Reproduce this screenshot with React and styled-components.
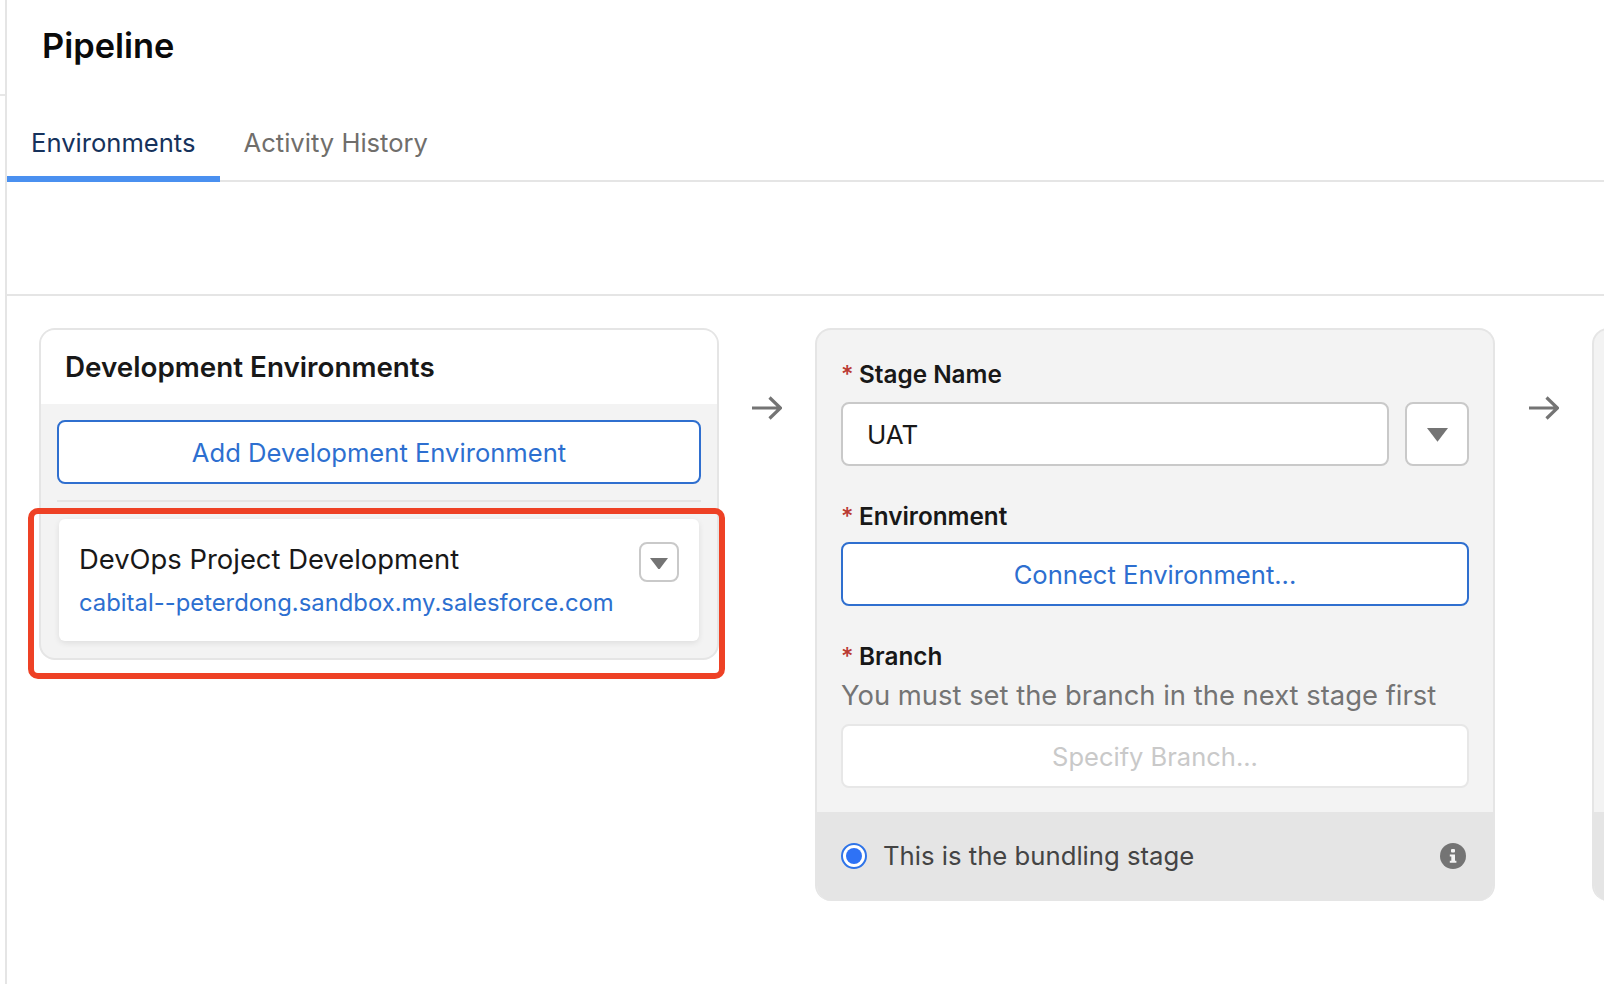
import React from "react";
import styled, { createGlobalStyle } from "styled-components";

const Global = createGlobalStyle`
  html, body { margin: 0; padding: 0; background: #fff; }
  body { font-family: Inter, "Liberation Sans", sans-serif; color: #181818; overflow: hidden; }
  * { box-sizing: border-box; }
`;

const Page = styled.div`
  width: 1604px;
  height: 984px;
  display: flex;
  overflow: hidden;
  background: #fff;
`;
const Rail = styled.div`
  width: 5px;
  flex: none;
  padding-top: 94px;
`;
const RailTick = styled.div`
  height: 2px;
  background: #e7e7e7;
`;
const Main = styled.main`
  flex: 1;
  min-width: 0;
  border-left: 2px solid #e5e5e5;
  display: flex;
  flex-direction: column;
`;
const Title = styled.h1`
  margin: 0;
  height: 94px;
  padding: 24px 0 0 35px;
  font-size: 34.4px;
  line-height: 44px;
  font-weight: 600;
  color: #0a0a0a;
`;
const TabBar = styled.div`
  height: 88px;
  display: flex;
  border-bottom: 2px solid #e5e5e5;
`;
const Tab = styled.div`
  height: 88px;
  padding: 32px 24px 0;
  font-size: 25.6px;
  line-height: 34px;
  color: ${(p) => (p.$active ? "#16325c" : "#706e6b")};
  border-bottom: 6px solid ${(p) => (p.$active ? "#4a90f0" : "transparent")};
`;
const Spacer = styled.div`
  height: 114px;
  border-bottom: 2px solid #e5e5e5;
`;
const Board = styled.div`
  display: flex;
  align-items: flex-start;
  padding: 32px 0 0 32px;
`;
const Arrow = styled.div`
  width: ${(p) => p.$w}px;
  flex: none;
  display: flex;
  justify-content: center;
  padding-top: 68px;
  color: #747474;
`;
const EnvCard = styled.section`
  width: 680px;
  flex: none;
  height: 332px;
  border: 2px solid #e5e5e5;
  border-radius: 16px;
  background: #f3f3f3;
`;
const EnvHead = styled.h2`
  margin: 0;
  height: 74px;
  padding: 19px 0 0 24px;
  background: #fff;
  border-radius: 14px 14px 0 0;
  font-size: 27.8px;
  line-height: 36px;
  font-weight: 600;
  color: #181818;
`;
const EnvBody = styled.div`
  padding: 16px 16px 0;
`;
const OutlineBtn = styled.div`
  height: 64px;
  margin-top: ${(p) => p.$top || 0}px;
  background: #fff;
  border: 2px solid #2f6fcf;
  border-radius: 8px;
  display: flex;
  align-items: center;
  justify-content: center;
  font-size: 25.6px;
  color: #2d6fd0;
`;
const Rule = styled.div`
  height: 2px;
  margin: 16px 0 17px;
  background: #e5e5e5;
`;
const ItemWrap = styled.div`
  position: relative;
`;
const Item = styled.div`
  height: 122px;
  margin: 0 2px 0 2px;
  padding: 22px 20px 0 20px;
  background: #fff;
  border-radius: 6px;
  box-shadow: 0 2px 6px rgba(0, 0, 0, 0.09);
  display: flex;
  justify-content: space-between;
  align-items: flex-start;
`;
const ItemName = styled.div`
  font-size: 27.4px;
  line-height: 36px;
  color: #181818;
`;
const ItemLink = styled.div`
  margin-top: 9px;
  font-size: 23.85px;
  line-height: 34px;
  color: #2d6fd0;
`;
const MenuBtn = styled.div`
  width: 40px;
  height: 40px;
  margin-top: 1px;
  padding-top: 3px;
  background: #fff;
  border: 2px solid #c9c9c9;
  border-radius: 8px;
  display: flex;
  align-items: center;
  justify-content: center;
`;
const StageCard = styled.section`
  width: 680px;
  height: 573px;
  flex: none;
  border: 2px solid #e5e5e5;
  border-bottom: none;
  border-radius: 16px;
  background: #f3f3f3;
  display: flex;
  flex-direction: column;
  overflow: hidden;
`;
const StageBody = styled.div`
  flex: 1;
  padding: 0 24px;
`;
const Label = styled.div`
  display: flex;
  align-items: center;
  height: 34px;
  margin-top: ${(p) => p.$top}px;
  font-size: 24.3px;
  font-weight: 600;
  color: #181818;
`;
const Star = styled.span`
  width: 18px;
  font-size: 24px;
  font-weight: 500;
  color: #ba3a33;
`;
const Row = styled.div`
  display: flex;
  gap: 16px;
  margin-top: ${(p) => p.$top || 0}px;
`;
const Field = styled.div`
  flex: 1;
  height: 64px;
  background: #fff;
  border: 2px solid #c9c9c9;
  border-radius: 8px;
  padding-left: 24px;
  display: flex;
  align-items: center;
  font-size: 26px;
  color: #181818;
`;
const DropBtn = styled.div`
  width: 64px;
  height: 64px;
  padding-top: 2px;
  background: #fff;
  border: 2px solid #c9c9c9;
  border-radius: 8px;
  display: flex;
  align-items: center;
  justify-content: center;
`;
const Help = styled.div`
  font-size: 27.4px;
  line-height: 36px;
  margin-top: 4px;
  color: #747474;
`;
const DisabledBtn = styled.div`
  height: 64px;
  margin-top: 11px;
  background: #fff;
  border: 2px solid #e7e7e7;
  border-radius: 8px;
  display: flex;
  align-items: center;
  justify-content: center;
  font-size: 25.5px;
  color: #c9c9c9;
`;
const StageFoot = styled.div`
  height: 89px;
  flex: none;
  background: #e5e5e5;
  padding: 0 27px 1px 24px;
  display: flex;
  align-items: center;
`;
const Radio = styled.div`
  width: 26px;
  height: 26px;
  border-radius: 50%;
  background: #fff;
  border: 2px solid #2f74e8;
  display: flex;
  align-items: center;
  justify-content: center;
  margin-right: 16px;
`;
const RadioDot = styled.div`
  width: 16px;
  height: 16px;
  border-radius: 50%;
  background: #2e72f5;
`;
const FootText = styled.div`
  flex: 1;
  padding-bottom: 2px;
  font-size: 25.7px;
  color: #444;
`;
const Highlight = styled.div`
  position: absolute;
  left: -29px;
  top: -11px;
  width: 697px;
  height: 171px;
  border: 6px solid #ee4125;
  border-radius: 10px;
  pointer-events: none;
`;
const Peek = styled.section`
  flex: none;
  width: 40px;
  height: 573px;
  border: 2px solid #e5e5e5;
  border-bottom: none;
  border-radius: 16px 0 0 16px;
  background: #f3f3f3;
  display: flex;
  flex-direction: column;
  justify-content: flex-end;
  overflow: hidden;
`;
const PeekFoot = styled.div`
  height: 89px;
  background: #e5e5e5;
`;

const ArrowIcon = () => (
  <svg width="30" height="24" viewBox="0 0 30 24" fill="none" stroke="currentColor" strokeWidth="3.2">
    <path d="M0 12h28M17.5 1.5 28.5 12 17.5 22.5" />
  </svg>
);
const Caret = ({ w }) => (
  <svg width={w} height={w * 0.66} viewBox="0 0 22 14.5" fill="#747474">
    <path d="M0 0h22L11 14.5z" />
  </svg>
);
const InfoIcon = () => (
  <svg width="26" height="26" viewBox="0 0 26 26">
    <circle cx="13" cy="13" r="13" fill="#747474" />
    <rect x="11" y="6" width="4" height="3.6" rx="1" fill="#f3f3f3" />
    <path d="M9.8 11.5H15v6.2h1.4v2H9.8v-2h1.5v-4.2H9.8z" fill="#f3f3f3" />
  </svg>
);

export default function App() {
  return (
    <Page>
      <Global />
      <Rail><RailTick /></Rail>
      <Main>
        <Title>Pipeline</Title>
        <TabBar>
          <Tab $active>Environments</Tab>
          <Tab>Activity History</Tab>
        </TabBar>
        <Spacer />
        <Board>
          <EnvCard>
            <EnvHead>Development Environments</EnvHead>
            <EnvBody>
              <OutlineBtn>Add Development Environment</OutlineBtn>
              <Rule />
              <ItemWrap>
                <Item>
                  <div>
                    <ItemName>DevOps Project Development</ItemName>
                    <ItemLink>cabital--peterdong.sandbox.my.salesforce.com</ItemLink>
                  </div>
                  <MenuBtn><Caret w={18} /></MenuBtn>
                </Item>
                <Highlight />
              </ItemWrap>
            </EnvBody>
          </EnvCard>
          <Arrow $w={96}><ArrowIcon /></Arrow>
          <StageCard>
            <StageBody>
              <Label $top={27}><Star>*</Star>Stage Name</Label>
              <Row $top={11}>
                <Field>UAT</Field>
                <DropBtn><Caret w={21} /></DropBtn>
              </Row>
              <Label $top={33}><Star>*</Star>Environment</Label>
              <OutlineBtn $top={9}>Connect Environment...</OutlineBtn>
              <Label $top={33}><Star>*</Star>Branch</Label>
              <Help>You must set the branch in the next stage first</Help>
              <DisabledBtn>Specify Branch...</DisabledBtn>
            </StageBody>
            <StageFoot>
              <Radio><RadioDot /></Radio>
              <FootText>This is the bundling stage</FootText>
              <InfoIcon />
            </StageFoot>
          </StageCard>
          <Arrow $w={97}><ArrowIcon /></Arrow>
          <Peek><PeekFoot /></Peek>
        </Board>
      </Main>
    </Page>
  );
}
